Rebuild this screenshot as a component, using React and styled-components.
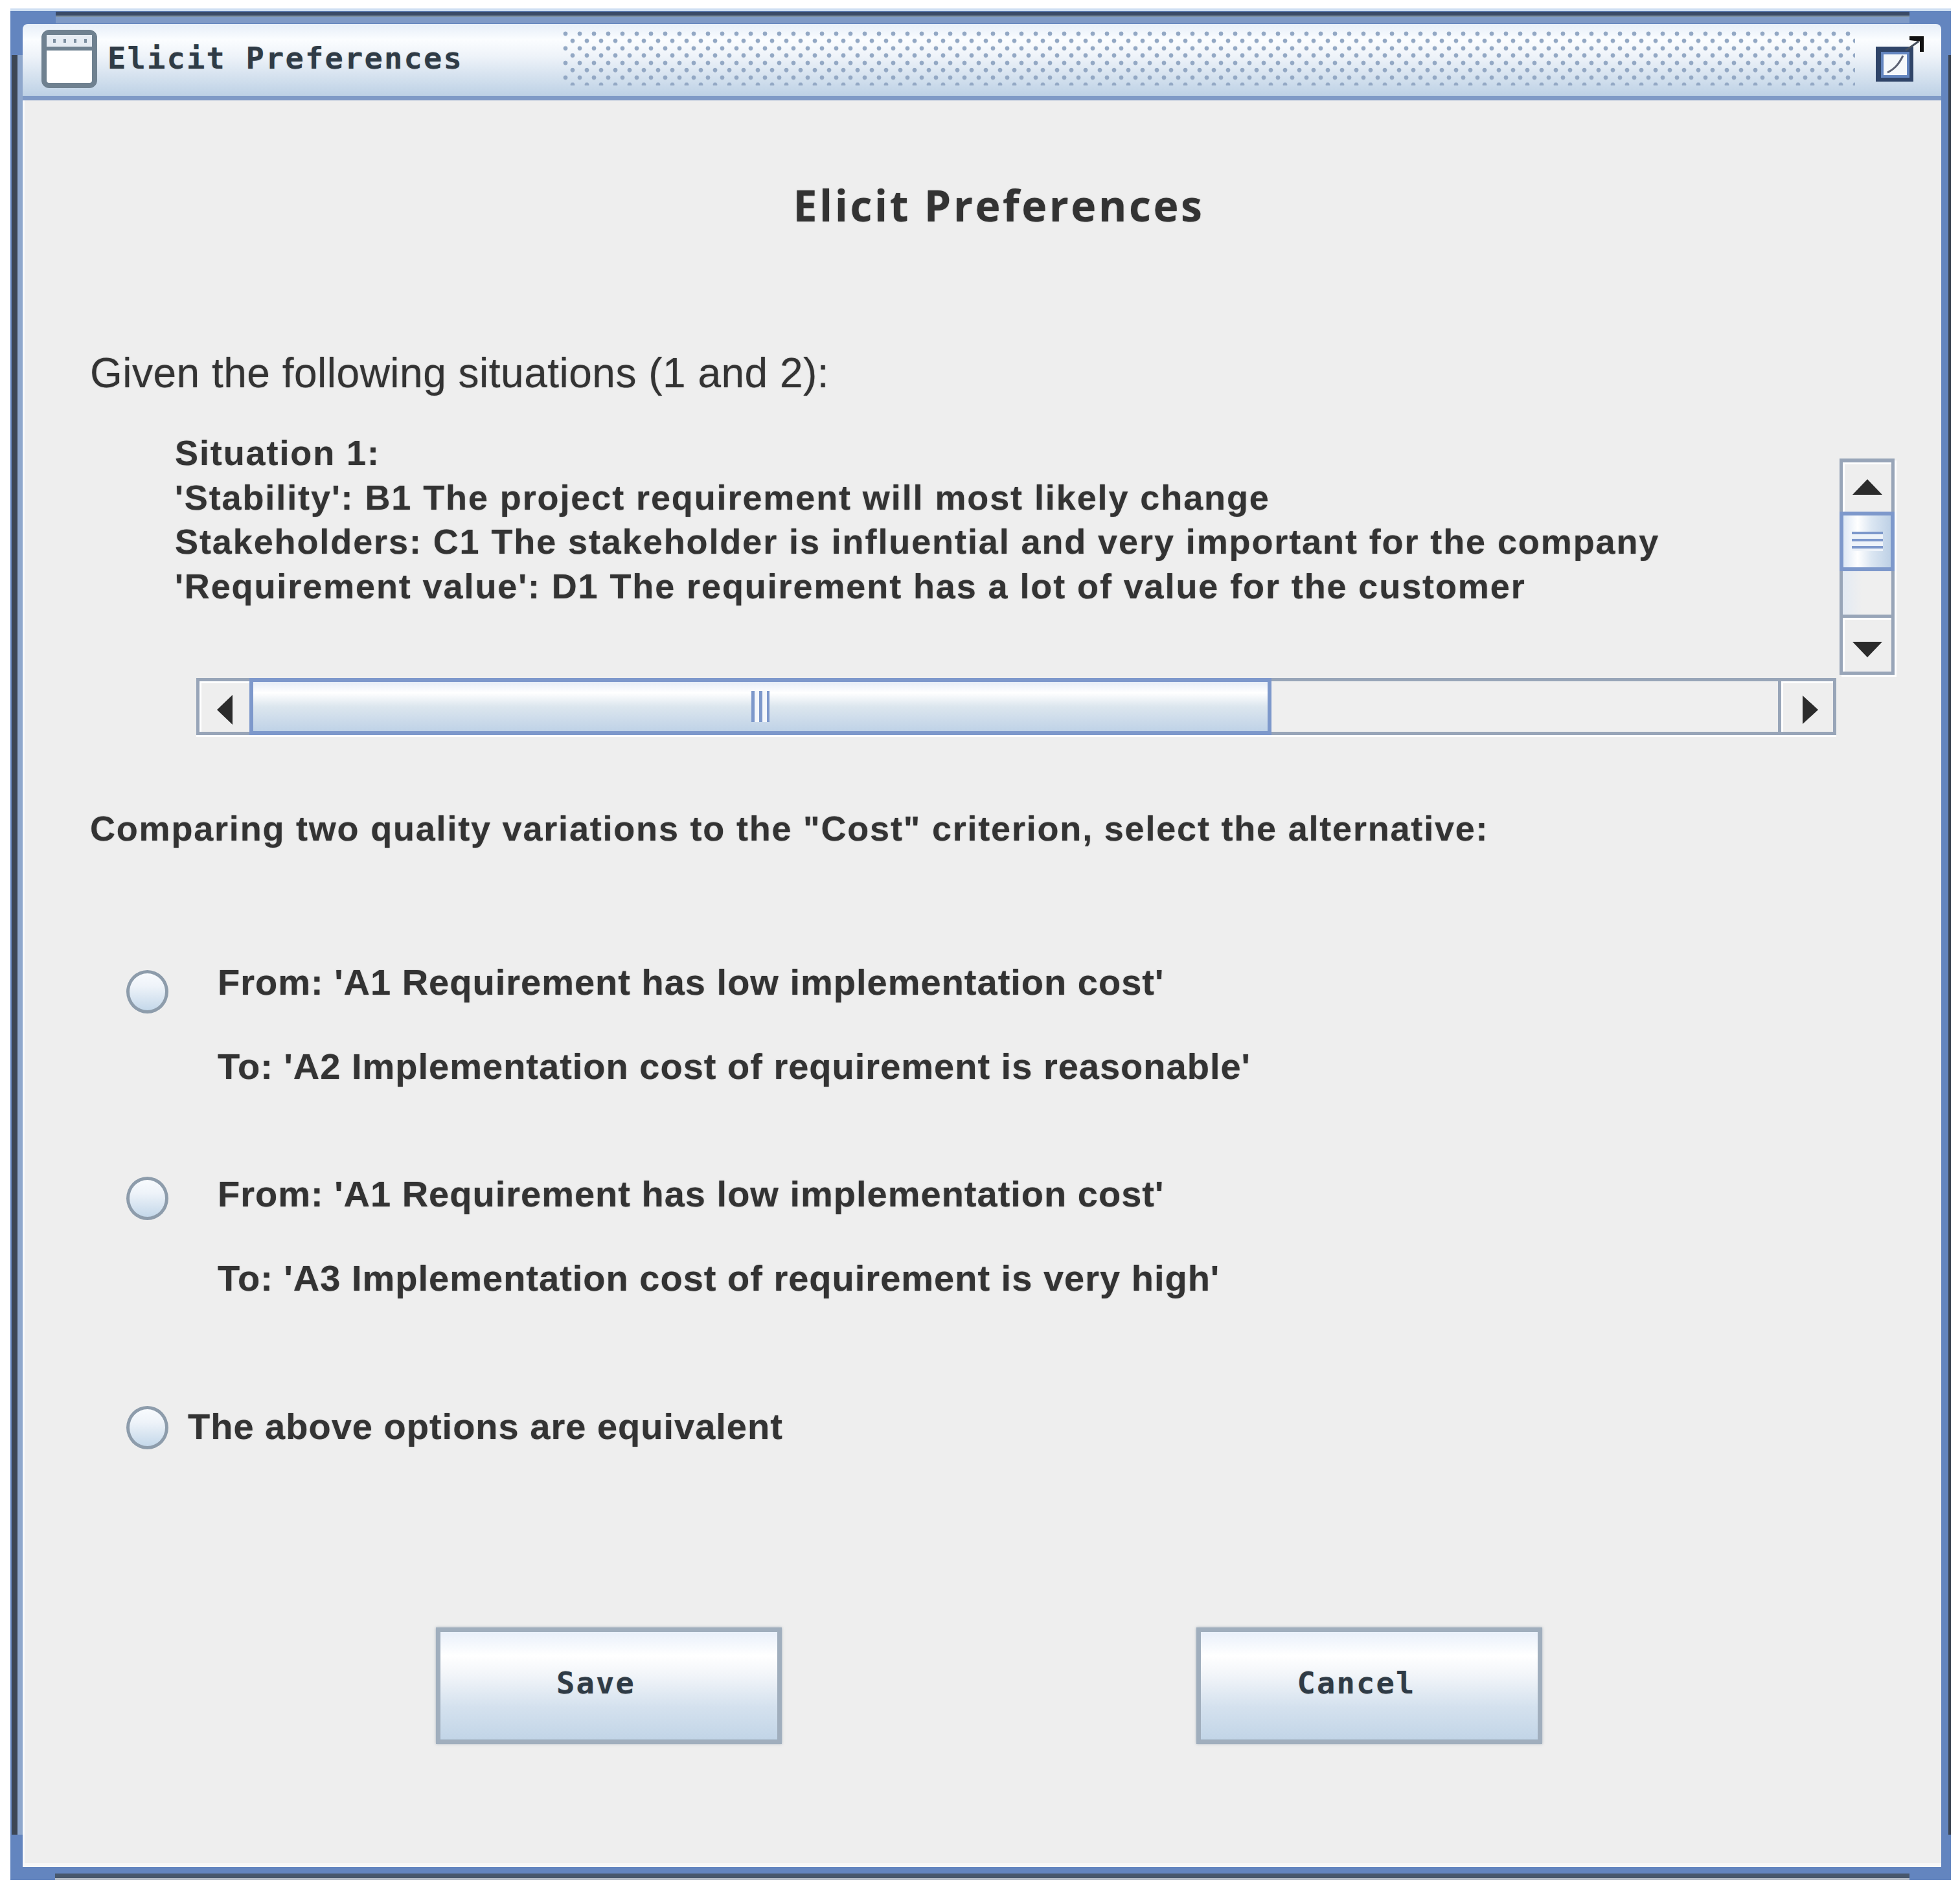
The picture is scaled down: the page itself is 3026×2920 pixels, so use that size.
import React from 'react';
import styled, { createGlobalStyle } from 'styled-components';

const GlobalStyle = createGlobalStyle`
  html, body {
    margin: 0;
    padding: 0;
    background: #fff;
  }
`;

const Window = styled.div`
  position: relative;
  box-sizing: border-box;
  width: 2996px;
  height: 2890px;
  margin: 13px 0 0 16px;
  padding: 24px 15px 20px 19px;
  display: flex;
  flex-direction: column;
  background: #6385bf;
  box-shadow: inset 0 4px 0 #cfdff2;
  overflow: hidden;
`;

const TopEdge = styled.div`
  position: absolute;
  top: 5px;
  left: 70px;
  right: 64px;
  height: 18px;
  background: linear-gradient(#3a4a66 0 6px, #7d8f9f 6px 8px, #7f9ac6 8px);
`;

const BottomEdge = styled.div`
  position: absolute;
  bottom: 0;
  left: 69px;
  right: 64px;
  height: 10px;
  background: linear-gradient(#47576c 0 7px, #b4bcc6 7px);
`;

const SideEdge = styled.div`
  position: absolute;
  top: 72px;
  bottom: 70px;
  ${({ $side }) => ($side === 'left' ? 'left: 2px; width: 9px; border-right: 8px solid #8ea7cc;' : 'right: 0; width: 4px;')}
  background: #3c4654;
`;

const TitleBar = styled.div`
  box-sizing: border-box;
  flex: none;
  height: 118px;
  padding: 0 27px 7px 29px;
  display: flex;
  align-items: center;
  border-bottom: 7px solid #7f9ac6;
  border-radius: 8px 8px 0 0;
  background: linear-gradient(#e6eef8 0, #fbfdff 22%, #eef3f9 45%, #bdd1e5 100%);
`;

const WindowIcon = styled.svg`
  flex: none;
  width: 86px;
  height: 90px;
  margin-top: 3px;
`;

const TitleText = styled.div`
  flex: none;
  width: 702px;
  padding-left: 16px;
  font-family: "DejaVu Sans Mono", monospace;
  font-size: 47px;
  font-weight: 700;
  letter-spacing: 2.2px;
  color: #2f3b46;
  text-shadow: 0 0 1.5px rgba(50, 50, 50, 0.4);
  white-space: pre;
`;

const DotField = styled.div`
  flex: 1;
  height: 85px;
  margin-right: 28px;
  background-image:
    radial-gradient(circle at 5px 5px, #93a8c4 0 3px, transparent 3.8px),
    radial-gradient(circle at 16px 16px, #93a8c4 0 3px, transparent 3.8px);
  background-size: 22px 22.6px;
`;

const MaximizeIcon = styled.svg`
  flex: none;
  width: 78px;
  height: 78px;
`;

const Content = styled.div`
  flex: 1;
  padding: 126px 0 0 104px;
  background: #eeeeee;
  box-shadow: inset 3px 0 0 #f8f9fb, inset 0 -6px 0 #f7f7f7;
  font-family: "Liberation Sans", Arial, sans-serif;
  color: #333;
  text-shadow: 0 0 1.5px rgba(50, 50, 50, 0.55);
`;

const Heading = styled.div`
  margin-left: -104px;
  padding-left: 52px;
  line-height: 70px;
  text-align: center;
  font-family: "Open Sans", sans-serif;
  font-size: 66px;
  font-weight: 700;
  letter-spacing: 3.6px;
`;

const Given = styled.div`
  margin-top: 185px;
  line-height: 80px;
  font-size: 64px;
  letter-spacing: 0.5px;
`;

const Pane = styled.div`
  margin-top: 49px;
  display: grid;
  grid-template-columns: 2701px 85px;
  grid-template-rows: 375px 88px;
  row-gap: 7px;
`;

const Situation = styled.div`
  padding-left: 131px;
  font-size: 54px;
  font-weight: 700;
  line-height: 68.6px;
  letter-spacing: 1.9px;
  white-space: nowrap;
`;

const VBar = styled.div`
  box-sizing: border-box;
  height: 334px;
  margin-top: 43px;
  display: flex;
  flex-direction: column;
  border: 5px solid #98a5b8;
  border-top-width: 6px;
  box-shadow: 3px 3px 0 #fff;
`;

const ArrowCell = styled.div`
  flex: none;
  box-sizing: border-box;
  display: flex;
  align-items: center;
  justify-content: center;
  box-shadow: inset 3px 3px 0 #fff;
`;

const VArrowCell = styled(ArrowCell)`
  height: ${({ $h }) => $h}px;
  padding-top: ${({ $pad }) => $pad}px;
`;

const VThumb = styled.div`
  flex: none;
  box-sizing: border-box;
  height: 92px;
  margin: 0 -5px;
  display: flex;
  align-items: center;
  justify-content: center;
  border: 6px solid #7d98cb;
  background: linear-gradient(90deg, #dde8f5 0, #ffffff 30%, #dbe6f2 60%, #bed1e6 100%);
`;

const VTrack = styled.div`
  flex: none;
  height: 72px;
  background: linear-gradient(90deg, #e3eaf3, #efefef 40%);
  border-bottom: 5px solid #98a5b8;
  box-sizing: border-box;
`;

const VGrip = styled.div`
  width: 48px;
  height: 30px;
  background: repeating-linear-gradient(#7d98cb 0 4px, #eef3f9 4px 11px);
`;

const HBar = styled.div`
  grid-column: 1;
  box-sizing: border-box;
  height: 88px;
  margin: 0 5px 0 164px;
  display: flex;
  border-top: 5px solid #98a5b8;
  border-bottom: 5px solid #98a5b8;
  box-shadow: 0 3px 0 #fff;
`;

const HArrowCell = styled(ArrowCell)`
  width: ${({ $w }) => $w}px;
  padding: 10px 0 0 ${({ $pad }) => $pad}px;
  border-${({ $side }) => $side}: 5px solid #98a5b8;
`;

const HThumb = styled.div`
  flex: none;
  box-sizing: border-box;
  width: 1578px;
  height: 88px;
  margin-top: -5px;
  display: flex;
  align-items: center;
  justify-content: center;
  border: 6px solid #7d98cb;
  background: linear-gradient(#e6edf7 0, #ffffff 22%, #dce6ee 50%, #bfd2e7 100%);
`;

const HGrip = styled.div`
  width: 28px;
  height: 48px;
  background: repeating-linear-gradient(90deg, #7d98cb 0 5px, #f4f7fb 5px 12px);
`;

const HTrack = styled.div`
  flex: 1;
  background: #efefef;
  border-right: 5px solid #98a5b8;
`;

const Compare = styled.div`
  margin-top: 109px;
  line-height: 70px;
  font-size: 54px;
  font-weight: 700;
  letter-spacing: 1.8px;
  white-space: nowrap;
`;

const Option = styled.div`
  display: flex;
  align-items: flex-start;
  margin: ${({ $top }) => $top}px 0 0 56px;
`;

const Radio = styled.div`
  flex: none;
  box-sizing: border-box;
  width: 65px;
  height: 67px;
  margin-top: ${({ $offset }) => $offset}px;
  border: 5px solid #8d9cab;
  border-radius: 50%;
  background: linear-gradient(#f8fbfe 0, #eef3f9 35%, #c4d8ea 100%);
`;

const OptionLines = styled.div`
  margin-left: ${({ $gap }) => $gap}px;
  display: flex;
  flex-direction: column;
  gap: 60px;
`;

const OptionLine = styled.div`
  line-height: 70px;
  font-size: 56px;
  font-weight: 700;
  letter-spacing: 1px;
  white-space: nowrap;
`;

const ButtonRow = styled.div`
  margin: 275px 0 0 534px;
  display: flex;
  gap: 640px;
`;

const Button = styled.div`
  box-sizing: border-box;
  width: 534px;
  height: 180px;
  padding: 0 40px 10px 0;
  display: flex;
  align-items: center;
  justify-content: center;
  border: 7px solid #a0aebd;
  box-shadow: 0 0 4px rgba(130, 145, 160, 0.6);
  background: linear-gradient(#e9f0fa 0, #ffffff 22%, #f2f5f9 40%, #d4e1ee 70%, #c2d5e7 100%);
  font-family: "DejaVu Sans Mono", monospace;
  font-size: 47px;
  font-weight: 700;
  letter-spacing: 2.2px;
  color: #2f3b46;
  text-shadow: 0 0 1.5px rgba(50, 50, 50, 0.4);
`;

const Arrow = styled.svg`
  display: block;
  fill: #2b2b2b;
`;

const App = () => (
  <>
    <GlobalStyle />
    <Window>
      <TopEdge />
      <BottomEdge />
      <SideEdge $side="left" />
      <SideEdge $side="right" />
      <TitleBar>
        <WindowIcon viewBox="0 0 86 90">
          <rect x="4" y="4" width="78" height="82" rx="8" fill="#fff" stroke="#6f8190" strokeWidth="8" />
          <rect x="8" y="8" width="70" height="18" fill="#e6ecf3" />
          <rect x="6" y="26" width="74" height="6" fill="#6f8190" />
          <path d="M20 14v6M36 14v6M52 14v6M68 14v6" stroke="#7d8fa0" strokeWidth="4" />
        </WindowIcon>
        <TitleText>Elicit Preferences</TitleText>
        <DotField />
        <MaximizeIcon viewBox="0 0 78 78">
          <rect x="8" y="26" width="50" height="46" fill="#f5f8fb" stroke="#2f4468" strokeWidth="8" />
          <rect x="14" y="32" width="40" height="36" fill="none" stroke="#6385bf" strokeWidth="4" />
          <path d="M22 62 C34 56 40 48 46 36" fill="none" stroke="#5d6274" strokeWidth="3" />
          <path d="M50 28 L70 14" stroke="#46505f" strokeWidth="3" fill="none" />
          <path d="M56 6 H78 V30 H72 V14 L56 12 Z" fill="#111" />
        </MaximizeIcon>
      </TitleBar>
      <Content>
        <Heading>Elicit Preferences</Heading>
        <Given>Given the following situations (1 and 2):</Given>
        <Pane>
          <Situation>
            <div>Situation 1:</div>
            <div>'Stability': B1 The project requirement will most likely change</div>
            <div>Stakeholders: C1 The stakeholder is influential and very important for the company</div>
            <div>'Requirement value': D1 The requirement has a lot of value for the customer</div>
          </Situation>
          <VBar>
            <VArrowCell $h={76} $pad={0}>
              <Arrow width="46" height="24" viewBox="0 0 46 24"><path d="M23 0 L46 24 H0 Z" /></Arrow>
            </VArrowCell>
            <VThumb><VGrip /></VThumb>
            <VTrack />
            <VArrowCell $h={83} $pad={14}>
              <Arrow width="46" height="24" viewBox="0 0 46 24"><path d="M0 0 H46 L23 24 Z" /></Arrow>
            </VArrowCell>
          </VBar>
          <HBar>
            <HArrowCell $w={82} $pad={0} $side="left">
              <Arrow width="24" height="46" viewBox="0 0 24 46"><path d="M24 0 V46 L0 23 Z" /></Arrow>
            </HArrowCell>
            <HThumb><HGrip /></HThumb>
            <HTrack />
            <HArrowCell $w={85} $pad={10} $side="right">
              <Arrow width="24" height="44" viewBox="0 0 24 44"><path d="M0 0 L24 22 L0 44 Z" /></Arrow>
            </HArrowCell>
          </HBar>
        </Pane>
        <Compare>Comparing two quality variations to the "Cost" criterion, select the alternative:</Compare>
        <Option $top={168}>
          <Radio $offset={16} />
          <OptionLines $gap={76}>
            <OptionLine>From: 'A1 Requirement has low implementation cost'</OptionLine>
            <OptionLine>To: 'A2 Implementation cost of requirement is reasonable'</OptionLine>
          </OptionLines>
        </Option>
        <Option $top={127}>
          <Radio $offset={8} />
          <OptionLines $gap={76}>
            <OptionLine>From: 'A1 Requirement has low implementation cost'</OptionLine>
            <OptionLine>To: 'A3 Implementation cost of requirement is very high'</OptionLine>
          </OptionLines>
        </Option>
        <Option $top={159}>
          <Radio $offset={3} />
          <OptionLines $gap={30}>
            <OptionLine>The above options are equivalent</OptionLine>
          </OptionLines>
        </Option>
        <ButtonRow>
          <Button>Save</Button>
          <Button>Cancel</Button>
        </ButtonRow>
      </Content>
    </Window>
  </>
);

export default App;
